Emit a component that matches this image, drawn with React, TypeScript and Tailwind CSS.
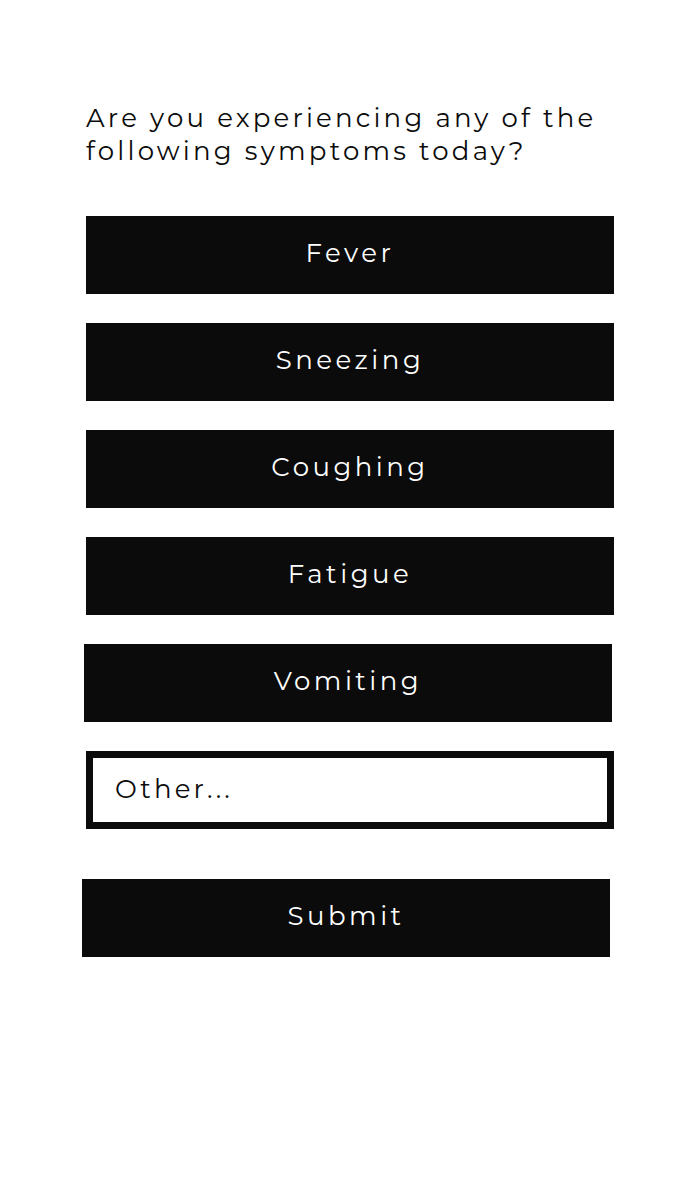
import React, { useState } from 'react';

const symptoms = ['Fever', 'Sneezing', 'Coughing', 'Fatigue', 'Vomiting'];

const font = { fontFamily: 'Montserrat, "Open Sans", "DejaVu Sans", sans-serif' };

export default function App() {
  const [selected, setSelected] = useState<string[]>([]);
  const [other, setOther] = useState('');

  const toggle = (s: string) =>
    setSelected((prev) => (prev.includes(s) ? prev.filter((x) => x !== s) : [...prev, s]));

  return (
    <div className="min-h-[1200px] w-[700px] bg-white" style={font}>
      <div className="flex flex-col pl-[86px] pt-[102px] w-[614px]">
        <h1 className="text-[26px] leading-[33px] tracking-[3.2px] text-[#0b0b0b] font-normal">
          Are you experiencing any of the following symptoms today?
        </h1>

        <div className="mt-[48px] flex flex-col gap-[29px]">
          {symptoms.map((s, i) => (
            <button
              key={s}
              onClick={() => toggle(s)}
              className={`h-[78px] w-[528px] pb-1 bg-[#0b0b0b] text-white text-[26px] tracking-[3.5px] ${
                i === 4 ? 'ml-[-2px]' : ''
              } ${selected.includes(s) ? 'opacity-80' : ''}`}
            >
              {s}
            </button>
          ))}

          <div className="h-[78px] w-[528px] border-[7px] border-[#0b0b0b] flex items-center">
            <input
              value={other}
              onChange={(e) => setOther(e.target.value)}
              placeholder="Other..."
              className="w-full h-full pl-[22px] pb-[2px] text-[26px] tracking-[3.2px] text-[#0b0b0b] placeholder:text-[#0b0b0b] outline-none bg-white"
              style={font}
            />
          </div>
        </div>

        <button className="mt-[50px] ml-[-4px] h-[78px] w-[528px] pb-1 bg-[#0b0b0b] text-white text-[26px] tracking-[3.5px]">
          Submit
        </button>
      </div>
    </div>
  );
}
